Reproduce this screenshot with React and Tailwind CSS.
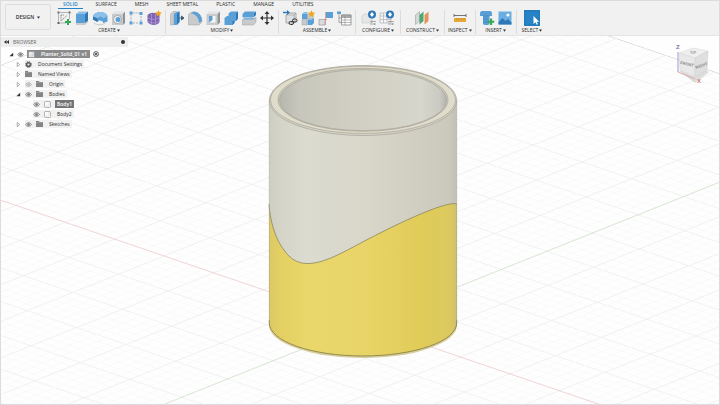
import clsx from "clsx";

const tabs = [
  "SOLID",
  "SURFACE",
  "MESH",
  "SHEET METAL",
  "PLASTIC",
  "MANAGE",
  "UTILITIES",
];

const BLUE = "#5a9fd6";
const DARK_BLUE = "#2f78b7";
const GRAY = "#c8cacb";
const LINE = "#8e9294";

/* ---------- Toolbar icons, all on a 16x16 grid ---------- */

const icons = {
  sketch: (
    <>
      <path d="M2.500 3.500V13H10M4 2.500h8M13.500 3.500V9" stroke="#999" strokeWidth=".7" />
      <path d="M5 5v6l6-5.500M5 5h3" stroke="#777" strokeWidth=".8" strokeDasharray="1.500 .7" />
      <path d="M1.500 1.500h2v2h-2zM12.500 1.500h2v2h-2zM1.500 12h2v2h-2z" fill="#666" />
      <path d="M12 9v6M9 12h6" stroke="#35a853" strokeWidth="2" />
    </>
  ),
  extrude: (
    <>
      <path d="m2 4 3-2.500h9L11 4z" fill="#8cc0e8" />
      <path d="M2 4h9v9H2z" fill={BLUE} />
      <path d="m11 4 3-2.500v9.500l-3 2z" fill={DARK_BLUE} />
      <path d="M2 13h9l3-2v1.500L11 15H2z" fill={GRAY} />
    </>
  ),
  revolve: (
    <>
      <path d="M1 6.500C2 1.500 13 0 15.500 6v5.500l-4 1.500C10 10 7 10 5.500 12L1 9.500z" fill={BLUE} />
      <path d="M1 6.500C2 1.500 13 0 15.500 6l-4 2.500C9.500 6 7 6 5.500 8.500z" fill="#8cc0e8" />
      <path d="M5.500 8.500V12L1 9.500v-3z" fill={DARK_BLUE} />
      <path d="M2 13c3 2.500 8 2.500 11 0" stroke={GRAY} />
    </>
  ),
  hole: (
    <>
      <path d="m2 4 2-2.500h11L13 4z" fill="#e3e4e5" />
      <path d="M2 4h11v11H2z" fill={GRAY} />
      <path d="m13 4 2-2.500V13l-2 2z" fill={LINE} />
      <circle cx="7.500" cy="9.500" r="4" fill="#f7f7f7" stroke={LINE} strokeWidth=".7" />
      <circle cx="8" cy="9.500" r="2.500" fill={BLUE} />
    </>
  ),
  pattern: (
    <>
      <path d="M4.500 3H12M3 4.500V12M13 6v6M5 13h6" stroke="#9aa0a4" strokeWidth=".8" strokeDasharray="2 1" />
      <path d="M1.500 1.500h3v3h-3zM11.500 2h3v3h-3zM1.500 11.500h3v3h-3zM11.500 11.500h3v3h-3z" fill={BLUE} />
    </>
  ),
  form: (
    <>
      <path d="M1.500 5.500C3 2 10 1.500 13.500 5.500V12c-2 4-9 4-12 0z" fill="#8064b4" />
      <path d="M1.500 7.500c4 2.500 8 2.500 12 0M1.500 11c4 2.500 8 2.500 12 0M5.500 4v11M9.500 4v11" stroke="#b7a5d8" strokeWidth=".6" />
      <path d="m12.500 0 1 2.300 2.500.2-2 1.700.7 2.300-2.200-1.200-2.200 1.200.7-2.300-2-1.700 2.500-.2z" fill="#f0a51e" />
    </>
  ),
  press: (
    <>
      <path d="m1.500 4 2.500-2.500h3L5 4v11H1.500z" fill={GRAY} stroke={LINE} strokeWidth=".4" />
      <path d="M5 4 8 1.500h2.500V12l-3 3H5z" fill={BLUE} />
      <path d="m8 4 2.500-2.500V12L8 15z" fill={DARK_BLUE} />
      <path d="M10 8h3M12.500 6l2.500 2-2.500 2z" stroke="#35566f" strokeWidth=".8" fill="#35566f" />
    </>
  ),
  fillet: (
    <>
      <path d="M1.500 4.500C4 1 9 1 12 4s3 6 3 8l-3 3H1.500z" fill={GRAY} stroke={LINE} strokeWidth=".4" />
      <path d="M4 3.500 6.500 1.800C12 2 15 6 15 11l-3 2C12 8 9 4 4 3.500z" fill={BLUE} />
    </>
  ),
  shell: (
    <>
      <path d="m1.500 4 2.500-2.500h11L12.500 4z" fill="#e3e4e5" />
      <path d="M1.500 4h11v11h-11z" fill={GRAY} />
      <path d="m12.500 4 2.500-2.500v11L12.500 15z" fill={LINE} />
      <path d="M4 6h6.500v6.500H4z" fill="#f7f7f7" />
      <path d="M4 6h3.500v4L4 12.500z" fill={BLUE} />
    </>
  ),
  combine: (
    <>
      <path d="M5.500 3.500 8 1.500h7v7L13 11h-1.500v2L9.500 15h-8V8L4 6h1.500z" fill={BLUE} />
      <path d="M13 3.500 15 1.500v7L13 11zM9.500 11H11.500v2l-2 2z" fill={DARK_BLUE} />
    </>
  ),
  split: (
    <>
      <path d="M1.500 4 4 1.500h11L12.500 4v3.500h-11z" fill={BLUE} />
      <path d="M12.500 4 15 1.500V5l-2.500 2.500z" fill={DARK_BLUE} />
      <path d="M1.500 9.500h11L15 7v5l-2.500 3h-11z" fill={GRAY} stroke={LINE} strokeWidth=".4" />
      <path d="m1.500 9.500 2-1.500H14l-1.500 1.500z" fill="#79b3e0" />
    </>
  ),
  move: (
    <>
      <path d="M8 3v10M3 8h10" stroke="#333" strokeWidth="1.200" />
      <path d="m8 1 2.500 3h-5zM8 15l-2.500-3h5zM1 8l3-2.500v5zM15 8l-3 2.500v-5z" fill="#333" />
    </>
  ),
  component: (
    <>
      <path d="m4 5 2-2h8v8l-2 2H4z" fill="#dfe0e1" stroke={LINE} strokeWidth=".7" />
      <path d="M4 5h8v8M12 5l2-2" stroke={LINE} strokeWidth=".5" />
      <path d="M1 2.500h4" stroke={DARK_BLUE} strokeWidth="1.500" />
      <path d="M5 0v5l3-2.500z" fill={DARK_BLUE} />
      <rect x="7" y="11.500" width="4.500" height="3" rx="1.500" stroke="#333" />
      <rect x="10.500" y="9" width="4.500" height="3" rx="1.500" stroke="#333" />
    </>
  ),
  newComponent: (
    <>
      <path d="m2 4 2-2h4L7 4z" fill="#8cc0e8" />
      <path d="M2 4h5.500v5H2z" fill={BLUE} />
      <path d="M2 9.500h5V15H2zM7.500 4H13v5H7.500z" fill={GRAY} stroke={LINE} strokeWidth=".4" />
      <path d="M7.500 9.500h4.500l2-1.500v5l-2 2H7.500z" fill={BLUE} />
      <path d="m11.500 0 1.100 2.400 2.700.3-2 1.800.6 2.600-2.400-1.300-2.400 1.300.6-2.600-2-1.800 2.700-.3z" fill="#f0a51e" />
    </>
  ),
  joint: (
    <>
      <path d="M8 2h7v6H8z" fill={BLUE} />
      <path d="M1 9.500h6V15H1z" fill="#dadbdc" stroke={LINE} strokeWidth=".6" />
      <path d="M7.500 2v13M7 9.500h2" stroke="#e08a87" strokeWidth=".8" />
    </>
  ),
  table: (
    <>
      <path d="M3 4v8.500h2M3 8h2" stroke="#888" strokeWidth=".7" />
      <path d="M1 1.500h4v2.500H1z" fill={BLUE} />
      <path d="M5.500 5H15v10H5.500z" fill="#fff" stroke="#888" strokeWidth=".8" />
      <path d="M5.500 5H15v2.500H5.500zM5.500 10H15M5.500 12.500H15M9 6v9" stroke="#888" strokeWidth=".6" fill="#aaa" />
    </>
  ),
  configure: (
    <>
      <path d="m1 6 2-2h8v9H1z" fill="#e5e6e7" stroke="#c5c7c8" strokeWidth=".6" />
      <circle cx="11" cy="4.500" r="4" fill={DARK_BLUE} />
      <path d="m11 2 2 2.500L11 7 9 4.500z" fill="#fff" />
      <path d="M9 11.500h6M9 14h6M11 10.500v2M13.500 13v2" stroke="#999" strokeWidth=".8" />
    </>
  ),
  configTable: (
    <>
      <path d="M1 3h11v10H1zM1 6h11M1 9.500h11M4.500 3v10M8 3v10" fill="#f5f5f5" stroke="#b0b3b5" strokeWidth=".7" />
      <circle cx="11" cy="4.500" r="4" fill={DARK_BLUE} />
      <path d="m11 2 2 2.500L11 7 9 4.500z" fill="#fff" />
      <path d="M9 11.500h6M9 14h6M11 10.500v2M13.500 13v2" stroke="#999" strokeWidth=".8" />
    </>
  ),
  plane: (
    <>
      <path d="m1.500 5 4-3.500V11l-4 3.500z" fill="#d5d7d8" stroke={LINE} strokeWidth=".5" />
      <path d="m5.500 5 4-3.500V11l-4 3.500z" fill="#4fa870" />
      <path d="m10.500 5 4-3.500V11l-4 3.500z" fill="#e5955a" />
    </>
  ),
  measure: (
    <>
      <path d="M2 5.500h12M2 4v3M14 4v3" stroke="#555" strokeWidth=".8" />
      <path d="M2 8h12v4H2z" fill="#e9a93a" />
      <path d="M4.500 8v2M7 8v2M9.500 8v2M12 8v2" stroke="#a8772a" strokeWidth=".5" />
    </>
  ),
  insert: (
    <>
      <path d="M1 2.500 2.500 1h9L13 2.500V6h-2.500v8L9 15H5.500L4 14V6H1z" fill={BLUE} />
      <path d="M4 6h6.500M4 9h5M4 12h5" stroke={DARK_BLUE} strokeWidth=".6" />
      <path d="M12 8.500v6.500M8.750 11.750h6.500" stroke="#35a853" strokeWidth="2.200" />
    </>
  ),
  picture: (
    <>
      <path d="M1.500 1.500h13v13h-13z" fill="#6aaee2" />
      <path d="m1.500 12 4-4 3 3 2.500-2 3.500 3.500v2h-13z" fill={DARK_BLUE} />
      <circle cx="11" cy="5" r="1.600" fill="#fff" />
    </>
  ),
  select: (
    <>
      <path d="M0 0h16v16H0z" fill="#2683c6" />
      <path d="M1 1h14v14H1z" stroke="#1a639b" strokeWidth=".6" strokeDasharray="1.500 1" />
      <path d="M9.500 6v8l2-1.800 1.200 2.600 1.200-.6-1.200-2.500h2.500z" fill="#fff" />
    </>
  ),
};

const groups = [
  { label: "CREATE", icons: ["sketch", "extrude", "revolve", "hole", "pattern", "form"], pad: "px-[3px]" },
  { label: "MODIFY", icons: ["press", "fillet", "shell", "combine", "split", "move"], pad: "px-[3px]" },
  { label: "ASSEMBLE", icons: ["component", "newComponent", "joint", "table"], pad: "px-[3px]" },
  { label: "CONFIGURE", icons: ["configure", "configTable"], pad: "px-[5px]" },
  { label: "CONSTRUCT", icons: ["plane"], pad: "px-[5px]" },
  { label: "INSPECT", icons: ["measure"], pad: "px-[3px]" },
  { label: "INSERT", icons: ["insert", "picture"], pad: "px-[3px]" },
  { label: "SELECT", icons: ["select"], pad: "px-[5px]" },
];

function Caret() {
  return (
    <svg viewBox="0 0 4 4" className="size-[3px] shrink-0" aria-hidden="true">
      <path d="M0 .5h4L2 3.500z" fill="#333" />
    </svg>
  );
}

function ToolGroup({ label, icons: names, pad, last }) {
  return (
    <div
      className={clsx(
        "flex flex-col items-center border-r",
        pad,
        last ? "border-transparent" : "border-[#dcdcdc]"
      )}
    >
      <div className="flex gap-[2px]">
        {names.map((name) => (
          <button key={name} type="button" aria-label={name} className="size-4">
            <svg viewBox="0 0 16 16" fill="none" className="size-4">
              {icons[name]}
            </svg>
          </button>
        ))}
      </div>
      <button type="button" className="flex items-center gap-px h-2">
        {label}
        <Caret />
      </button>
    </div>
  );
}

function Toolbar() {
  return (
    <header className="flex gap-[2px] h-[35px] pl-1 bg-[#f1f1f1] border-b border-[#e4e4e4] text-[5px] leading-[7px] font-medium text-[#2b2b2b] whitespace-nowrap">
      <button
        type="button"
        className="flex items-center justify-center gap-[3px] w-[46px] mt-[3px] mb-[5px] rounded-xs border border-[#dedede] font-semibold"
      >
        DESIGN
        <Caret />
      </button>
      <div className="flex flex-col gap-px">
        <nav className="flex gap-2 pl-[5px] h-2">
          {tabs.map((tab, i) => (
            <button
              key={tab}
              type="button"
              className={clsx(
                "px-[5px] border-b",
                i === 0
                  ? "border-[#2683c6] text-[#2683c6] font-semibold"
                  : "border-transparent"
              )}
            >
              {tab}
            </button>
          ))}
        </nav>
        <div className="flex">
          {groups.map((group, i) => (
            <ToolGroup key={group.label} {...group} last={i === groups.length - 1} />
          ))}
        </div>
      </div>
    </header>
  );
}

/* ---------- Browser tree ---------- */

function Arrow({ open }) {
  return (
    <svg viewBox="0 0 6 6" className="size-[5px] shrink-0" aria-hidden="true">
      {open ? (
        <path d="M5 1v4H.5z" fill="#333" />
      ) : (
        <path d="M1.500.5 4.500 3l-3 2.500z" fill="#fff" stroke="#777" strokeWidth=".7" />
      )}
    </svg>
  );
}

function Eye({ off }) {
  return (
    <svg viewBox="0 0 14 10" className="w-[7px] h-[5px] shrink-0" aria-hidden="true">
      <path d="M1 5c3-5 9-5 12 0-3 5-9 5-12 0z" fill="#ddd" stroke={off ? "#aaa" : "#777"} strokeWidth="1.500" />
      <circle cx="7" cy="5" r="2.500" fill={off ? "#bbb" : "#777"} />
    </svg>
  );
}

function Gear() {
  return (
    <svg viewBox="0 0 14 14" fill="none" className="size-[7px] shrink-0" aria-hidden="true">
      <circle cx="7" cy="7" r="5.800" stroke="#5c5c5c" strokeWidth="2" strokeDasharray="2.500 2.050" />
      <circle cx="7" cy="7" r="3.700" stroke="#5c5c5c" strokeWidth="3" />
    </svg>
  );
}

function Folder() {
  return (
    <svg viewBox="0 0 14 12" className="w-[7px] h-[6px] shrink-0" aria-hidden="true">
      <path d="M0 0h6l1 2h7v10H0z" fill="#858585" />
      <path d="M0 3h14" stroke="#aaa" />
    </svg>
  );
}

function Cube({ light }) {
  return (
    <svg viewBox="0 0 14 14" className="size-[7px] shrink-0" aria-hidden="true">
      <path d="M1 3q0-2 2-2h8q2 0 2 2v8q0 2-2 2H3q-2 0-2-2z" fill={light ? "#e6e9ee" : "#fafafa"} stroke="#8c8c8c" strokeWidth="1.200" />
      <path d="M10 1v9H3" stroke={light ? "#a9b2c0" : "#ccc"} fill="none" />
    </svg>
  );
}

const rows = [
  { label: "Document Settings", icon: "gear" },
  { label: "Named Views", icon: "folder" },
  { label: "Origin", icon: "folder", eye: "off" },
  { label: "Bodies", icon: "folder", eye: "on", open: true },
  { label: "Body1", icon: "cube", eye: "on", child: true, selected: true },
  { label: "Body2", icon: "cube", eye: "on", child: true },
  { label: "Sketches", icon: "folder", eye: "on" },
];

function TreeRow({ label, icon, eye, open, child, selected }) {
  return (
    <li className={clsx("flex items-center gap-1 h-[10px]", child ? "pl-8" : "pl-[15px]")}>
      {!child && <Arrow open={open} />}
      <button type="button" className="flex items-center gap-1 h-2 bg-[#f1f1f1]">
        {eye && <Eye off={eye === "off"} />}
        {icon === "gear" && <Gear />}
        {icon === "folder" && <Folder />}
        {icon === "cube" && <Cube />}
        <span
          className={clsx(
            "px-[2px] h-2",
            selected && "bg-[#757575] text-white font-semibold"
          )}
        >
          {label}
        </span>
      </button>
    </li>
  );
}

function Browser() {
  return (
    <aside className="relative w-[127px] pt-px text-[5px] leading-[8px] font-medium text-[#2b2b2b] whitespace-nowrap">
      <div className="flex items-center gap-1 h-[10px] px-[3px] bg-[#eeeeee]">
        <svg viewBox="0 0 10 8" className="w-[5px] h-1" aria-hidden="true">
          <path d="M5 0v8L0 4zM10 0v8L5 4z" fill="#333" />
        </svg>
        <h2 className="grow text-[#666]">BROWSER</h2>
        <button type="button" aria-label="Display options" className="size-1 rounded-full bg-[#333]" />
      </div>
      <ul className="pt-[2px]">
        <li className="flex items-center gap-[3px] h-[10px] pl-2">
          <Arrow open />
          <Eye />
          <button type="button" className="flex items-center gap-1 h-2 px-px bg-[#8b8b8b] text-white font-semibold">
            <Cube light />
            <span className="px-[2px]">Planter_Solid_01 v1</span>
          </button>
          <input
            type="radio"
            defaultChecked
            aria-label="Activate component"
            className="appearance-none size-[6px] rounded-full border border-[#888] bg-[#333] ring-1 ring-[#eee] ring-inset"
          />
        </li>
        {rows.map((row) => (
          <TreeRow key={row.label} {...row} />
        ))}
      </ul>
    </aside>
  );
}

/* ---------- 3D viewport ---------- */

// Each family of ground lines is parallel; y is given at x = 0.
const SLOPE_X = 0.341;
const SLOPE_Y = -0.4;

function gridLines(origin, step, slope, from, to) {
  const lines = [];
  for (let i = from * 5; i <= to * 5; i++) {
    // the axis itself is drawn in its own colour
    if (i === 0) continue;
    const y = origin + (i * step) / 5;
    lines.push({ y1: y, y2: y + 720 * slope, major: i % 5 === 0, edge: i === from * 5 });
  }
  return lines;
}

const ground = [
  ...gridLines(200, 33.8, SLOPE_X, -11, 7),
  ...gridLines(468, 36.6, SLOPE_Y, -11, 7),
];

const WAVE =
  "M269 204C270 222 276 240 284 250C290 259 298 263.500 307 263.500C326 264 348 249 382 232C404 221 426 211 442 206C449 204 454 203 457 204";

function Viewport() {
  return (
    <svg
      viewBox="1 36 718 368"
      preserveAspectRatio="xMidYMid slice"
      className="absolute inset-0 size-full"
      aria-hidden="true"
    >
      <defs>
        <clipPath id="floor">
          <path d="M0 65.500 321-62 720 73.500V405H0z" />
        </clipPath>
        <linearGradient id="clay">
          <stop offset="0" stopColor="#cfcec3" />
          <stop offset=".06" stopColor="#d4d4c8" />
          <stop offset=".2" stopColor="#dbdbcf" />
          <stop offset=".5" stopColor="#d9d6ca" />
          <stop offset=".8" stopColor="#d0cdc1" />
          <stop offset=".96" stopColor="#cbc8bc" />
          <stop offset="1" stopColor="#c2c0b6" />
        </linearGradient>
        <linearGradient id="inside">
          <stop offset="0" stopColor="#b8b7ae" />
          <stop offset=".12" stopColor="#c8c7bc" />
          <stop offset=".5" stopColor="#d2d0c4" />
          <stop offset=".85" stopColor="#d7d6cc" />
          <stop offset=".96" stopColor="#cacac3" />
          <stop offset="1" stopColor="#b4b4ae" />
        </linearGradient>
        <linearGradient id="glaze">
          <stop offset="0" stopColor="#dcc965" />
          <stop offset=".06" stopColor="#e3cf62" />
          <stop offset=".2" stopColor="#ead76b" />
          <stop offset=".5" stopColor="#e8d468" />
          <stop offset=".8" stopColor="#e1cc59" />
          <stop offset=".96" stopColor="#dcc95e" />
          <stop offset="1" stopColor="#cfc06c" />
        </linearGradient>
      </defs>

      <g clipPath="url(#floor)">
        {ground.map(({ y1, y2, major, edge }, i) => (
          <line
            key={i}
            x1="0"
            y1={y1}
            x2="720"
            y2={y2}
            stroke={edge ? "#c8c8c8" : major ? "#eeeeee" : "#f9f9f9"}
            strokeWidth={edge ? 1 : 0.8}
          />
        ))}
        <path d="M0 200 720 445.500" stroke="#ecc9c9" strokeWidth=".8" />
        <path d="M0 470 720 182" stroke="#cbe0c7" strokeWidth=".8" />
      </g>

      <path d="M269 323v2a94 33 0 0 0 188 0v-2z" fill="#d6cd9c" />
      <path d="M269.300 100v223a93.700 33 0 0 0 187.400 0V100z" fill="url(#clay)" />
      <path d={`${WAVE}V323A94 33 0 0 1 269 323z`} fill="url(#glaze)" />
      <path d={WAVE} fill="none" stroke="#8b8660" strokeWidth=".8" />
      <path d="M269.300 320v3a93.700 33 0 0 0 187.400 0v-3" fill="none" stroke="#8b8348" strokeWidth=".9" />
      <path d="M269.300 100v223M456.700 100v223" stroke="#a6a38f" strokeWidth=".5" />

      <g stroke="#9d9a8e" strokeWidth=".6">
        <ellipse cx="363" cy="100.500" rx="93.700" ry="35" fill="#d5d3c5" />
        <ellipse cx="363" cy="99.800" rx="92.500" ry="33.600" fill="#e0ddcc" />
        <ellipse cx="363" cy="99.800" rx="85" ry="31.500" fill="#d2d0c2" />
        <ellipse cx="363" cy="100.200" rx="83.500" ry="30.500" fill="url(#inside)" />
      </g>
    </svg>
  );
}

function ViewCube() {
  return (
    <svg viewBox="0 0 44 48" className="absolute right-1 top-1 w-11 h-12" fontFamily="Liberation Sans, sans-serif">
      <path d="M8 31 24 43 38 32 30 27z" fill="#dcdcdc" />
      <path d="M7 12v20" stroke="#8484cc" strokeWidth=".8" />
      <path d="m7 32 17 7" stroke="#d79a9a" strokeWidth=".8" />
      <path d="M8 13 22 8 37 11 24 18z" fill="#efefef" stroke="#d6d6d6" strokeWidth=".5" />
      <path d="M8 13 24 18v19L9 30z" fill="#e9e9e9" stroke="#d6d6d6" strokeWidth=".5" />
      <path d="m24 18 13-7-1 19-12 7z" fill="#dfdfdf" stroke="#cccccc" strokeWidth=".5" />
      <text x="9" y="24" fontSize="4" fontWeight="700" fill="#888" transform="rotate(12 9 24)">FRONT</text>
      <text x="25" y="29" fontSize="4" fontWeight="700" fill="#888" transform="rotate(-20 25 29)">RIGHT</text>
      <text x="19" y="14" fontSize="3" fontWeight="700" fill="#999">TOP</text>
      <text x="5" y="9" fontSize="6" fontWeight="700" fill="#7474b4">Z</text>
      <text x="26" y="43" fontSize="6" fontWeight="700" fill="#cc7a7a">X</text>
    </svg>
  );
}

export default function App() {
  return (
    <div className="flex flex-col min-h-screen bg-[#fefefe] border border-[#dcdcdc] font-['Open_Sans',sans-serif]">
      <Toolbar />
      <main className="relative grow overflow-hidden">
        <Viewport />
        <Browser />
        <ViewCube />
      </main>
    </div>
  );
}
